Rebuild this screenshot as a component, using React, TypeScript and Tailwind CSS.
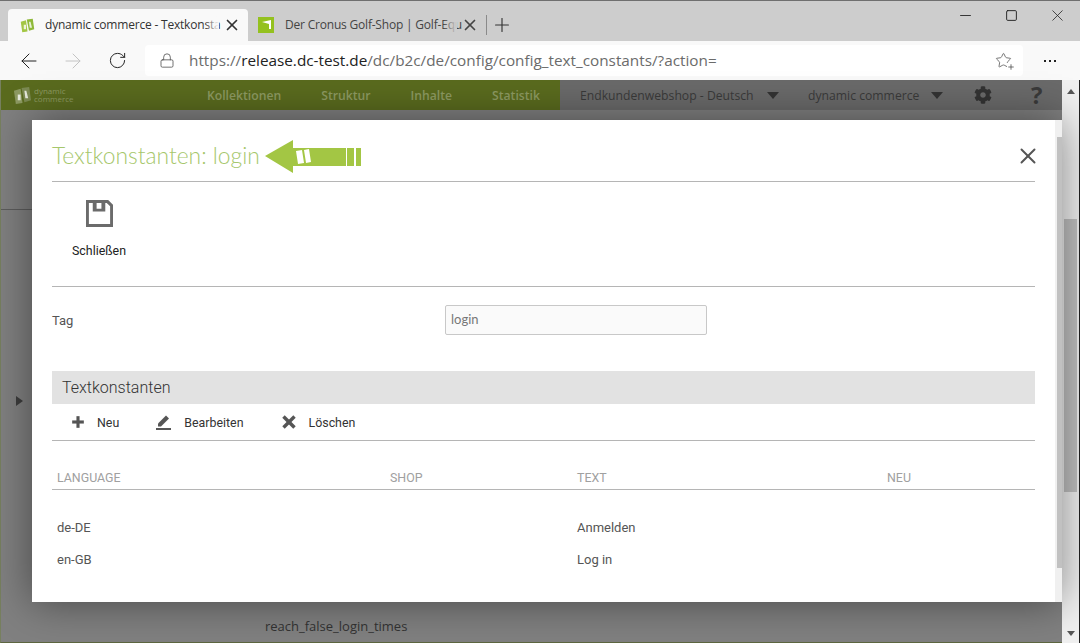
import { Plus, X, Minus, Square, ArrowLeft, ArrowRight, RotateCw, Lock, Star } from 'lucide-react'
import { FaCog } from 'react-icons/fa'

const roboto = { fontFamily: 'Roboto, sans-serif' }
const openSans = { fontFamily: '"Open Sans", sans-serif' }

function DcLogo({ className, a, b }: { className: string; a: string; b: string }) {
	return (
		<svg className={className} viewBox="0 0 20 20">
			<polygon points="1,5 8,3 10,18 3,19" fill={a} />
			<polygon points="9,2 17,1 19,15 12,17" fill={b} />
			<polygon points="5,9 8,9 8,15 5,15" fill="#ffffff" opacity="0.8" />
			<polygon points="12,5 14,5 16,13 13,13" fill="#ffffff" opacity="0.8" />
		</svg>
	)
}

function SaveIcon() {
	return (
		<svg className="w-[27px] h-[27px]" viewBox="0 0 28 28">
			<path
				fillRule="evenodd"
				fill="#6b6b6b"
				d="M0 0H23L28 5V28H0ZM3 3V25H25V6.5L21.5 3H20V12H7V3ZM11 3V9H16V3Z"
			/>
		</svg>
	)
}

function TabTitle({ text, width, color, fade }: { text: string; width: string; color: string; fade: string }) {
	return (
		<span className={`relative block text-[12px] tracking-[-0.2px] whitespace-nowrap ${width} ${color}`} style={openSans}>
			{text}
			<span className={`absolute right-0 top-0 bottom-0 w-[14px] bg-gradient-to-r from-transparent ${fade}`} />
		</span>
	)
}

function BrowserChrome() {
	return (
		<>
			<div className="h-[41px] bg-[#cdcdcd] border-t border-t-[#6f6f6f] flex items-end pl-[8px] relative shrink-0">
				<div className="w-[240px] h-[32px] bg-[#f9f9f9] rounded-t-[4px] flex items-center pl-[12px]">
					<DcLogo className="w-[15px] h-[15px]" a="#a3c644" b="#8fb93a" />
					<span className="ml-[10px]">
						<TabTitle text="dynamic commerce - Textkonsta" width="w-[174px]" color="text-[#333333]" fade="to-[#f9f9f9]" />
					</span>
					<X className="ml-[4px] w-[18px] h-[18px] text-[#333333]" strokeWidth={2.25} />
				</div>
				<div className="h-[32px] flex items-center pl-[10px]">
					<svg className="w-[16px] h-[16px]" viewBox="0 0 16 16">
						<rect width="16" height="16" fill="#94c11f" />
						<polygon points="4,5 13,3 13,12 11,12 11,7" fill="#ffffff" />
					</svg>
					<span className="ml-[11px]">
						<TabTitle text="Der Cronus Golf-Shop | Golf-Equ" width="w-[172px]" color="text-[#444444]" fade="to-[#cdcdcd]" />
					</span>
					<X className="ml-[4px] w-[18px] h-[18px] text-[#444444]" strokeWidth={2.25} />
					<div className="ml-[7px] w-px h-[20px] bg-[#8a8a8a]" />
					<Plus className="ml-[4px] w-[22px] h-[22px] text-[#333333]" strokeWidth={1.25} />
				</div>
				<div className="ml-auto self-start flex items-center pt-[5px] text-[#222222]">
					<div className="w-[46px] flex justify-center"><Minus className="w-[17px] h-[17px]" strokeWidth={1.25} /></div>
					<div className="w-[46px] flex justify-center py-[2px]"><Square className="w-[13px] h-[13px]" strokeWidth={1.75} /></div>
					<div className="w-[46px] flex justify-center"><X className="w-[19px] h-[19px]" strokeWidth={1} /></div>
				</div>
			</div>
			<div className="h-[39px] bg-[#f9f9f9] flex items-center shrink-0">
				<div className="ml-[7px] w-[44px] flex justify-center"><ArrowLeft className="w-[24px] h-[24px] text-[#222222]" strokeWidth={1} /></div>
				<div className="w-[44px] flex justify-center"><ArrowRight className="w-[24px] h-[24px] text-[#c4c4c4]" strokeWidth={1} /></div>
				<div className="w-[44px] flex justify-center"><RotateCw className="w-[19px] h-[19px] text-[#222222]" strokeWidth={1.25} /></div>
				<div className="ml-[6px] w-[878px] h-[31px] bg-white rounded-[4px] flex items-center pl-[14px]">
					<Lock className="w-[16px] h-[19px] text-[#555555]" strokeWidth={1.25} />
					<span className="ml-[14px] text-[15.3px] text-[#6b6b6b] whitespace-nowrap" style={openSans}>
						https://<span className="text-[#222222]">release.dc-test.de</span>/dc/b2c/de/config/config_text_constants/?action=
					</span>
					<div className="ml-auto mr-[11px] relative">
						<Star className="w-[17px] h-[17px] text-[#666666]" strokeWidth={1.25} />
						<Plus className="absolute -right-[3px] -bottom-[2px] w-[8px] h-[8px] bg-white text-[#555555]" strokeWidth={2.5} />
					</div>
				</div>
				<div className="ml-[21px] flex gap-[3px]">
					<span className="w-[2px] h-[2px] bg-[#222222]" />
					<span className="w-[2px] h-[2px] bg-[#222222]" />
					<span className="w-[2px] h-[2px] bg-[#222222]" />
				</div>
			</div>
		</>
	)
}

function NavBar() {
	return (
		<div className="h-[30px] flex shrink-0 text-[12.2px] whitespace-nowrap" style={openSans}>
			<div className="w-[559px] bg-[#5a6b1e] flex items-center font-semibold text-[#8d9a62]">
				<div className="w-[206px] flex items-center">
					<DcLogo className="ml-[12px] w-[19px] h-[19px]" a="#8d9a62" b="#7c8a52" />
					<span className="ml-[2px] text-[8px] leading-[8px] font-normal w-[36px] whitespace-normal">dynamic commerce</span>
				</div>
				<div className="flex gap-[40px] pt-[2px]">
					<span>Kollektionen</span>
					<span>Struktur</span>
					<span>Inhalte</span>
					<span>Statistik</span>
				</div>
			</div>
			<div className="flex-1 bg-[#6a6a6a] flex items-center text-[#3a3a3a] pl-[20px]">
				<span className="w-[177px] pt-[2px]">Endkundenwebshop - Deutsch</span>
				<span className="ml-[10px] border-x-[6px] border-x-transparent border-t-[7px] border-t-[#333333]" />
				<span className="ml-[29px] w-[115px] pt-[2px]">dynamic commerce</span>
				<span className="ml-[8px] border-x-[6px] border-x-transparent border-t-[7px] border-t-[#333333]" />
				<FaCog className="ml-[31px] w-[18px] h-[18px] text-[#333333]" />
				<span className="ml-[39px] text-[24px] font-bold text-[#3a3a3a]">?</span>
			</div>
		</div>
	)
}

function Modal() {
	return (
		<div className="absolute left-[31px] right-0 top-[40px] h-[482px] bg-white flex shadow-[0_0_40px_rgba(0,0,0,0.45)]" style={roboto}>
			<div className="flex-1 px-[20px] flex flex-col">
				<div className="h-[62px] border-b border-b-[#b5b5b5] flex items-center pt-[10px] shrink-0">
					<h1 className="text-[22.8px] font-light text-[#a6c76c]" style={{ fontFamily: 'Lato, sans-serif' }}>Textkonstanten: login</h1>
					<svg className="ml-[5px] w-[96px] h-[34px]" viewBox="0 0 96 34">
						<polygon points="0,17 28,1 28,9 81,9 81,27 28,27 28,34" fill="#a3c644" />
						<rect x="82" y="9" width="7" height="18" fill="#a3c644" />
						<rect x="91" y="9" width="5" height="18" fill="#a3c644" />
						<polygon points="31,12 37,11 39,24 33,25" fill="#ffffff" />
						<polygon points="39,11 44,10 46,23 41,24" fill="#ffffff" />
					</svg>
					<X className="ml-auto mr-[-6px] w-[26px] h-[26px] text-[#555555]" strokeWidth={1.8} />
				</div>
				<div className="h-[105px] border-b border-b-[#b5b5b5] shrink-0 flex flex-col items-start">
					<div className="w-[94px] flex flex-col items-center pt-[18px]">
						<SaveIcon />
						<span className="mt-[15px] text-[12.4px] text-[#222222]">Schließen</span>
					</div>
				</div>
				<div className="h-[84px] flex shrink-0 pt-[18px]">
					<span className="w-[393px] pt-[6px] text-[13px] text-[#555555]">Tag</span>
					<div className="w-[262px] h-[30px] bg-[#fafafa] border border-[#c8c8c8] rounded-[2px] flex items-center pl-[5px] text-[13px] text-[#777777]" style={{ fontFamily: 'Lato, sans-serif' }}>
						login
					</div>
				</div>
				<div className="h-[33px] bg-[#e2e2e2] flex items-center pl-[10px] pt-[1px] text-[16px] font-light text-[#333333] shrink-0">Textkonstanten</div>
				<div className="h-[37px] border-b border-b-[#b5b5b5] flex items-center text-[12.4px] text-[#333333] shrink-0">
					<Plus className="ml-[16px] w-[20px] h-[20px] text-[#555555]" strokeWidth={3.75} strokeLinecap="butt" />
					<span className="ml-[9px] pt-[2px]">Neu</span>
					<svg className="ml-[37px] w-[15px] h-[16px]" viewBox="0 0 15 16">
						<polygon points="2,9.5 10,1.5 13,4.5 5,12.5 2,12.5" fill="#555555" />
						<rect x="0" y="14" width="15" height="2" fill="#555555" />
					</svg>
					<span className="ml-[13px] pt-[2px]">Bearbeiten</span>
					<X className="ml-[34px] w-[22px] h-[22px] text-[#555555]" strokeWidth={3.75} strokeLinecap="butt" />
					<span className="ml-[9px] pt-[2px]">Löschen</span>
				</div>
				<div className="grid grid-cols-[333px_187px_310px_1fr] pl-[5px] h-[49px] items-end pb-[1px] border-b border-b-[#b5b5b5] text-[12.4px] text-[#a0a0a0] shrink-0">
					<span>LANGUAGE</span>
					<span>SHOP</span>
					<span>TEXT</span>
					<span>NEU</span>
				</div>
				<div className="grid grid-cols-[333px_187px_310px_1fr] pl-[5px] pt-[22px] auto-rows-[32px] items-center text-[13px] text-[#555555]">
					<span>de-DE</span>
					<span />
					<span>Anmelden</span>
					<span />
					<span>en-GB</span>
					<span />
					<span>Log in</span>
					<span />
				</div>
			</div>
			<div className="w-[7px] bg-[#f0f0f0] flex flex-col items-end">
				<div className="mt-[17px] w-[5px] h-[431px] bg-[#c1c1c1]" />
			</div>
		</div>
	)
}

export default function App() {
	return (
		<div className="w-[1080px] h-[643px] overflow-hidden flex flex-col bg-[#808080]">
			<BrowserChrome />
			<div className="flex-1 flex min-h-0">
				<div className="w-[1062px] relative flex flex-col border-l border-l-[#77805f] border-b border-b-[#5d6640]">
					<NavBar />
					<div className="h-[100px] border-b border-b-[#5c5c5c] shrink-0" />
					<div className="pt-[186px] pl-[15px] shrink-0">
						<span className="block border-y-[5px] border-y-transparent border-l-[7px] border-l-[#3d3d3d] w-0" />
					</div>
					<div className="mt-[211px] ml-[264px] text-[13px] text-[#333333]" style={openSans}>
						reach_false_login_times
					</div>
					<Modal />
				</div>
				<div className="w-[18px] bg-[#f0f0f0] border-r border-r-[#222222] flex flex-col items-center">
					<span className="mt-[9px] border-x-[4px] border-x-transparent border-b-[5px] border-b-[#555555]" />
					<div className="mt-[125px] w-[13px] h-[273px] bg-[#c1c1c1]" />
					<span className="mt-auto mb-[7px] border-x-[4px] border-x-transparent border-t-[5px] border-t-[#555555]" />
				</div>
			</div>
		</div>
	)
}
